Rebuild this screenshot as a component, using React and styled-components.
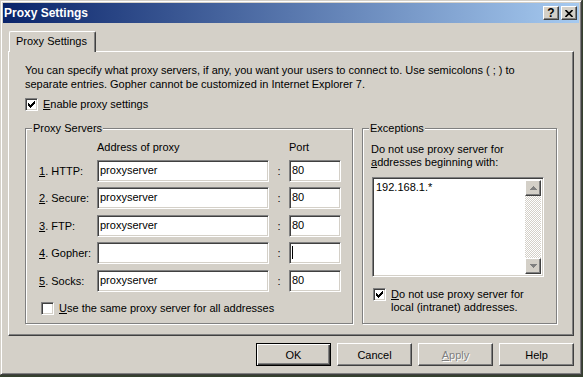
import React from "react";
import styled, { createGlobalStyle, css } from "styled-components";

const face = "#d4d0c8";

const GlobalStyle = createGlobalStyle`
  html, body {
    margin: 0;
    padding: 0;
  }
  body {
    width: 583px;
    height: 377px;
    overflow: hidden;
    background: #36412f;
    font-family: "Liberation Sans", Arial, sans-serif;
    font-size: 11px;
    color: #000;
  }
`;

const raised = css`
  border: 1px solid;
  border-color: #fff #404040 #404040 #fff;
  box-shadow: inset -1px -1px #808080;
`;

const sunken = css`
  border: 1px solid;
  border-color: #808080 #fff #fff #808080;
  box-shadow: inset 1px 1px #404040, inset -1px -1px ${face};
`;

const Window = styled.div`
  width: 582px;
  height: 375px;
  box-sizing: border-box;
  background: ${face};
  border: 1px solid;
  border-color: ${face} #404040 #404040 ${face};
  box-shadow: inset 1px 1px #fff, inset -1px -1px #808080;
  padding: 2px;
  display: flex;
  flex-direction: column;
`;

const TitleBar = styled.div`
  height: 20px;
  display: flex;
  align-items: center;
  justify-content: space-between;
  padding: 0 2px 0 1px;
  background: linear-gradient(to right, #0a246a, #a6caf0);
`;

const Title = styled.span`
  color: #fff;
  font-weight: bold;
  font-size: 12px;
`;

const TitleButtons = styled.div`
  display: flex;
  gap: 2px;
`;

const TitleButton = styled.div`
  width: 16px;
  height: 14px;
  box-sizing: border-box;
  background: ${face};
  ${raised};
  display: flex;
  align-items: center;
  justify-content: center;
  font-weight: bold;
  font-size: 12px;
  line-height: 12px;
`;

const Client = styled.div`
  flex: 1;
  display: flex;
  flex-direction: column;
  padding: 8px 5px 0;
`;

const TabStrip = styled.div`
  display: flex;
  padding-left: 1px;
  height: 20px;
  position: relative;
  z-index: 1;
`;

const Tab = styled.div`
  width: 87px;
  height: 21px;
  box-sizing: border-box;
  background: ${face};
  border-top: 1px solid #fff;
  border-left: 1px solid #fff;
  border-right: 1px solid #404040;
  box-shadow: inset -1px 0 #808080;
  border-radius: 2px 2px 0 0;
  padding-left: 6px;
  line-height: 18px;
`;

const Pane = styled.div`
  height: 285px;
  box-sizing: border-box;
  border: 1px solid;
  border-color: #fff #404040 #404040 #fff;
  box-shadow: inset -1px -1px #808080;
  padding: 11px 16px 0;
`;

const Intro = styled.p`
  margin: 0;
  line-height: 14px;
  white-space: nowrap;
`;

const CheckRow = styled.label`
  display: flex;
  align-items: flex-start;
  gap: 5px;
  margin-top: ${(p) => p.$top || 0}px;
  margin-left: ${(p) => p.$left || 0}px;
  line-height: 13px;
`;

const Box = styled.span`
  width: 13px;
  height: 13px;
  box-sizing: border-box;
  flex: none;
  background: #fff;
  ${sunken};
  display: flex;
  align-items: center;
  justify-content: center;
`;

const Groups = styled.div`
  display: flex;
  gap: 9px;
  margin-top: 17px;
`;

const GroupBox = styled.div`
  position: relative;
  width: ${(p) => p.$width}px;
  height: 196px;
  box-sizing: border-box;
  border: 1px solid #808080;
  box-shadow: inset 1px 1px #fff, 1px 1px #fff;
  padding: ${(p) => p.$pad};
`;

const Legend = styled.span`
  position: absolute;
  top: -7px;
  left: 6px;
  padding: 0 1px;
  background: ${face};
  line-height: 13px;
`;

const ProxyGrid = styled.div`
  display: grid;
  grid-template-columns: 58px 172px 20px 52px;
  grid-template-rows: 14px;
  grid-auto-rows: 22px;
  row-gap: 5.5px;
  align-items: center;
`;

const Head = styled.div`
  line-height: 14px;
`;

const Field = styled.div`
  height: 22px;
  box-sizing: border-box;
  background: #fff;
  ${sunken};
  padding: 0 2px;
  line-height: 19px;
  white-space: nowrap;
`;

const Caret = styled.span`
  display: inline-block;
  width: 1px;
  height: 13px;
  background: #000;
  vertical-align: middle;
  margin-top: -2px;
`;

const Colon = styled.span`
  text-align: center;
`;

const Para = styled.p`
  margin: 0;
  line-height: 13px;
`;

const ListBox = styled.div`
  width: 172px;
  height: 100px;
  box-sizing: border-box;
  margin: 8px 0 0 1px;
  background: #fff;
  ${sunken};
  padding: 2px;
  display: flex;
`;

const ListText = styled.div`
  flex: 1;
  line-height: 14px;
  padding-left: 1px;
`;

const ScrollBar = styled.div`
  width: 16px;
  display: flex;
  flex-direction: column;
`;

const ScrollButton = styled.div`
  width: 16px;
  height: 16px;
  box-sizing: border-box;
  background: ${face};
  ${raised};
  display: flex;
  align-items: center;
  justify-content: center;
`;

const Track = styled.div`
  flex: 1;
  background-image: repeating-conic-gradient(#fff 0 25%, ${face} 0 50%);
  background-size: 2px 2px;
`;

const ButtonRow = styled.div`
  display: flex;
  justify-content: flex-end;
  gap: 6px;
  margin-top: 7px;
`;

const Button = styled.div`
  width: 75px;
  height: 23px;
  box-sizing: border-box;
  background: ${face};
  display: flex;
  align-items: center;
  justify-content: center;
  ${(p) =>
    p.$default
      ? css`
          border: 1px solid #000;
          box-shadow: inset 1px 1px #fff, inset -1px -1px #404040,
            inset -2px -2px #808080;
        `
      : raised};
  ${(p) =>
    p.$disabled &&
    css`
      color: #808080;
      text-shadow: 1px 1px #fff;
    `}
`;

const Check = () => (
  <svg width="7" height="7" viewBox="0 0 7 7" shapeRendering="crispEdges">
    {[2, 3, 4, 3, 2, 1, 0].map((y, x) => (
      <rect key={x} x={x} y={y} width="1" height="3" fill="#000" />
    ))}
  </svg>
);

const Arrow = ({ down }) => (
  <svg width="7" height="4" viewBox="0 0 7 4" shapeRendering="crispEdges">
    {[0, 1, 2, 3].map((i) => {
      const w = down ? 7 - i * 2 : 1 + i * 2;
      return (
        <rect key={i} x={(7 - w) / 2} y={i} width={w} height="1" fill="#808080" />
      );
    })}
  </svg>
);

const proxies = [
  { n: "1", label: "HTTP:", addr: "proxyserver", port: "80" },
  { n: "2", label: "Secure:", addr: "proxyserver", port: "80" },
  { n: "3", label: "FTP:", addr: "proxyserver", port: "80" },
  { n: "4", label: "Gopher:", addr: "", port: null },
  { n: "5", label: "Socks:", addr: "proxyserver", port: "80" },
];

export default function App() {
  return (
    <>
      <GlobalStyle />
      <Window>
        <TitleBar>
          <Title>Proxy Settings</Title>
          <TitleButtons>
            <TitleButton>?</TitleButton>
            <TitleButton>
              <svg width="8" height="7" viewBox="0 0 8 7">
                <path d="M0.5 0 L7.5 7 M7.5 0 L0.5 7" stroke="#000" strokeWidth="1.6" />
              </svg>
            </TitleButton>
          </TitleButtons>
        </TitleBar>
        <Client>
          <TabStrip>
            <Tab>Proxy Settings</Tab>
          </TabStrip>
          <Pane>
            <Intro>
              You can specify what proxy servers, if any, you want your users to connect to. Use semicolons ( ; ) to
              <br />
              separate entries. Gopher cannot be customized in Internet Explorer 7.
            </Intro>
            <CheckRow $top={7}>
              <Box>
                <Check />
              </Box>
              <span>
                <u>E</u>nable proxy settings
              </span>
            </CheckRow>
            <Groups>
              <GroupBox $width={328} $pad="11px 0 0 13px">
                <Legend>Proxy Servers</Legend>
                <ProxyGrid>
                  <span />
                  <Head>Address of proxy</Head>
                  <span />
                  <Head>Port</Head>
                  {proxies.map((p) => (
                    <React.Fragment key={p.n}>
                      <span>
                        <u>{p.n}</u>. {p.label}
                      </span>
                      <Field>{p.addr}</Field>
                      <Colon>:</Colon>
                      <Field>{p.port === null ? <Caret /> : p.port}</Field>
                    </React.Fragment>
                  ))}
                </ProxyGrid>
                <CheckRow $top={10} $left={2}>
                  <Box />
                  <span>
                    <u>U</u>se the same proxy server for all addresses
                  </span>
                </CheckRow>
              </GroupBox>
              <GroupBox $width={195} $pad="14px 8px 0">
                <Legend>Exceptions</Legend>
                <Para>
                  Do not use proxy server for
                  <br />
                  <u>a</u>ddresses beginning with:
                </Para>
                <ListBox>
                  <ListText>192.168.1.*</ListText>
                  <ScrollBar>
                    <ScrollButton>
                      <Arrow />
                    </ScrollButton>
                    <Track />
                    <ScrollButton>
                      <Arrow down />
                    </ScrollButton>
                  </ScrollBar>
                </ListBox>
                <CheckRow $top={11} $left={2}>
                  <Box>
                    <Check />
                  </Box>
                  <Para>
                    <u>D</u>o not use proxy server for
                    <br />
                    local (intranet) addresses.
                  </Para>
                </CheckRow>
              </GroupBox>
            </Groups>
          </Pane>
          <ButtonRow>
            <Button $default>OK</Button>
            <Button>Cancel</Button>
            <Button $disabled>
              <span>
                <u>A</u>pply
              </span>
            </Button>
            <Button>Help</Button>
          </ButtonRow>
        </Client>
      </Window>
    </>
  );
}
